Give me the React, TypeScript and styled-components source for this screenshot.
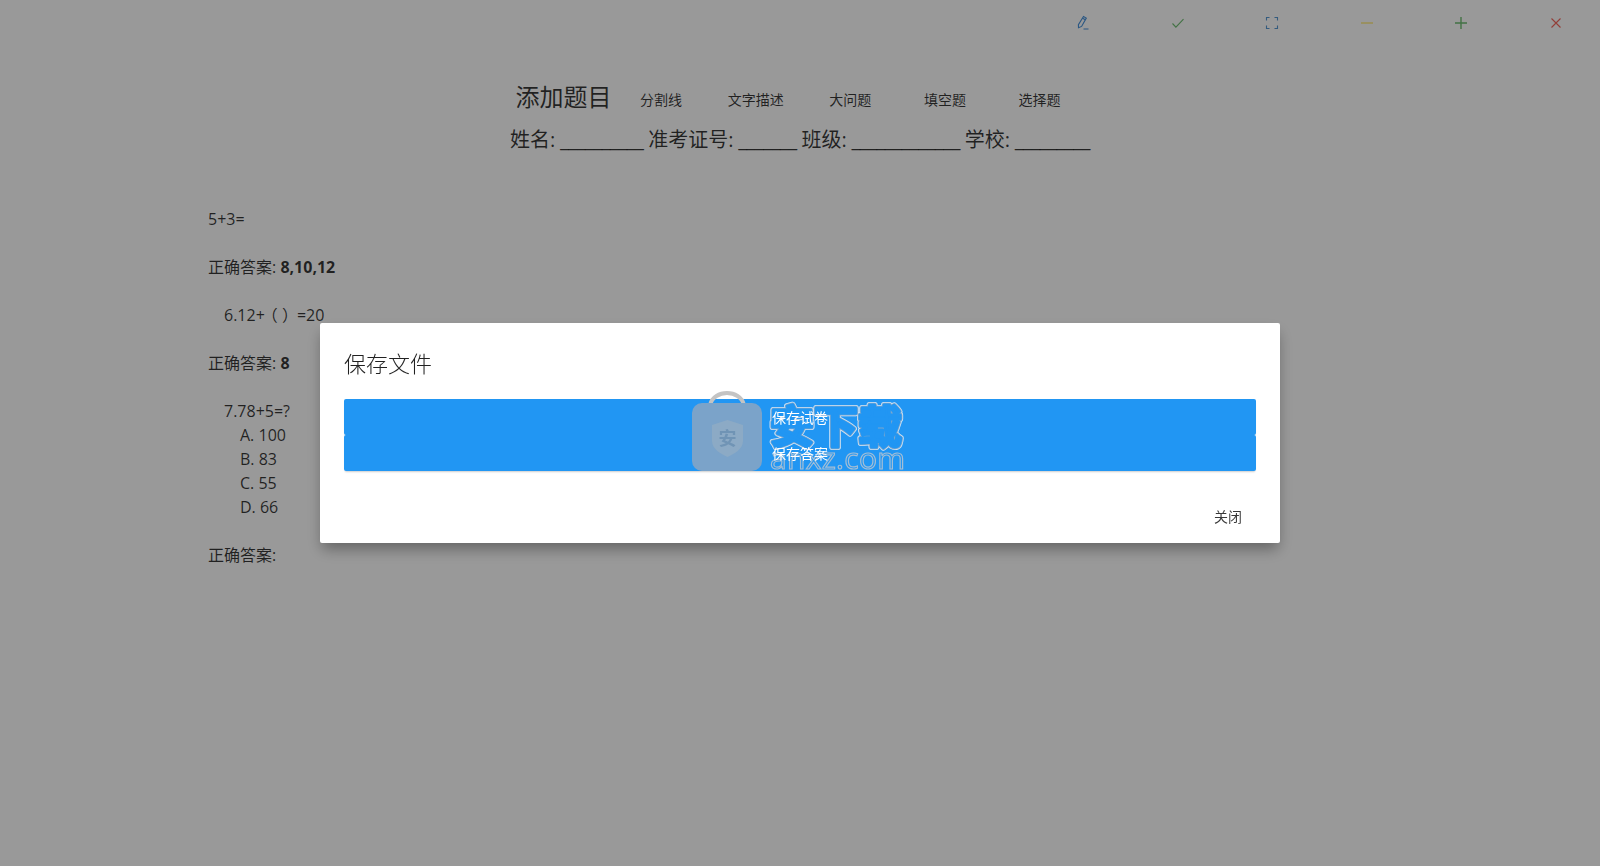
import * as React from 'react';
import styled, { createGlobalStyle } from 'styled-components';

const FONT = '"Open Sans", "Noto Sans CJK SC", sans-serif';

const GlobalStyle = createGlobalStyle`
  html, body {
    margin: 0;
    padding: 0;
    height: 100%;
    background: #fff;
  }
  body {
    font-family: ${FONT};
    font-size: 16px;
    line-height: 24px;
    color: rgba(0, 0, 0, 0.78);
    overflow: hidden;
  }
`;

const Toolbar = styled.div`
  display: flex;
  justify-content: flex-end;
  gap: 4.6px;
  height: 44px;
  padding-top: 1px;
`;

const IconButton = styled.button<{ $tint: string }>`
  width: 90px;
  height: 44px;
  padding: 0 0 0 2px;
  border: 0;
  background: none;
  color: ${(p) => p.$tint};
  opacity: 0.8;
  display: flex;
  align-items: center;
  justify-content: center;
`;

const Head = styled.div`
  display: flex;
  justify-content: center;
  align-items: center;
  gap: 4.6px;
  margin-top: 31px;
  height: 46px;
`;

const Title = styled.h1`
  margin: 0 0 4px;
  font-size: 24px;
  line-height: 32px;
  font-weight: 400;
`;

const TextButton = styled.button`
  width: 90px;
  height: 36px;
  padding: 0;
  border: 0;
  background: none;
  font: 400 14px ${FONT};
  color: rgba(0, 0, 0, 0.78);
`;

const Info = styled.div`
  margin-top: 3px;
  text-align: center;
  font-size: 20px;
  line-height: 30px;
  word-spacing: -0.5px;
`;

const Blank = styled.span`
  letter-spacing: -0.4px;
`;

const Paper = styled.div`
  padding: 52px 208px 0;
`;

const Question = styled.div`
  margin-bottom: 24px;
`;

const Stem = styled.div<{ $indent?: boolean }>`
  padding-left: ${(p) => (p.$indent ? '16px' : '0')};
`;

const Paren = styled.span`
  margin: 0 -1px 0 -3px;
`;

const Choice = styled.div`
  padding-left: 32px;
`;

const Overlay = styled.div`
  position: fixed;
  inset: 0;
  background: rgba(0, 0, 0, 0.4);
  display: flex;
  align-items: flex-start;
  justify-content: center;
  padding-top: 323px;
`;

const Dialog = styled.div`
  position: relative;
  width: 960px;
  height: 220px;
  box-sizing: border-box;
  background: #fff;
  border-radius: 2px;
  box-shadow: 0 8px 14px -2px rgba(0, 0, 0, 0.35);
  padding: 24px;
  display: flex;
  flex-direction: column;
`;

const DialogTitle = styled.h2`
  margin: 0 0 20px;
  font-size: 22px;
  line-height: 32px;
  font-weight: 300;
  color: rgba(0, 0, 0, 0.87);
`;

const Actions = styled.div`
  display: flex;
  flex-direction: column;
`;

const SaveButton = styled.button`
  height: 36px;
  border: 0;
  border-radius: 2px;
  background: #2196f3;
  font: 400 14px ${FONT};
  box-shadow: 0 2px 2px -1px rgba(0, 0, 0, 0.2);
`;

const SaveLabel = styled.span`
  position: relative;
  z-index: 2;
  color: #fff;
`;

const Footer = styled.div`
  display: flex;
  justify-content: flex-end;
  margin-top: 27px;
`;

const CloseButton = styled.button`
  width: 56px;
  height: 36px;
  padding: 0;
  border: 0;
  background: none;
  font: 400 14px ${FONT};
  color: rgba(0, 0, 0, 0.78);
`;

const Watermark = styled.svg`
  position: absolute;
  z-index: 1;
  left: 372px;
  top: 65px;
  pointer-events: none;
`;

const Icon = ({ children }: { children: React.ReactNode }) => (
  <svg width="16" height="16" viewBox="0 0 16 16" fill="none" stroke="currentColor" strokeWidth="1.1">
    {children}
  </svg>
);

export default function App() {
  return (
    <>
      <GlobalStyle />
      <Toolbar>
        <IconButton $tint="#1976d2">
          <Icon>
            <path d="M8.500 1.500l2.800 1.600-4.700 8.300-3.100 1.300-.1-3z" />
            <path d="M7.600 3.200l2.800 1.600M8.500 14h5" />
          </Icon>
        </IconButton>
        <IconButton $tint="#4caf50">
          <Icon>
            <path d="M2.500 8.500l3.400 3.600 7.600-8" />
          </Icon>
        </IconButton>
        <IconButton $tint="#2f7fc8">
          <Icon>
            <path d="M2.500 5.500v-3h3M10.500 2.500h3v3M13.500 10.500v3h-3M5.500 13.500h-3v-3" />
          </Icon>
        </IconButton>
        <IconButton $tint="#ffdf2e">
          <Icon>
            <path d="M2 8h12" />
          </Icon>
        </IconButton>
        <IconButton $tint="#4caf50">
          <Icon>
            <path d="M2 8h12M8 2v12" strokeWidth="1.4" />
          </Icon>
        </IconButton>
        <IconButton $tint="#f44336">
          <Icon>
            <path d="M3.500 3.500l9 9M12.500 3.500l-9 9" />
          </Icon>
        </IconButton>
      </Toolbar>
      <Head>
        <Title>添加题目</Title>
        <TextButton>分割线</TextButton>
        <TextButton>文字描述</TextButton>
        <TextButton>大问题</TextButton>
        <TextButton>填空题</TextButton>
        <TextButton>选择题</TextButton>
      </Head>
      <Info>
        姓名: <Blank>__________</Blank> 准考证号: <Blank>_______</Blank> 班级: <Blank>_____________</Blank> 学校: <Blank>_________</Blank>
      </Info>
      <Paper>
        <Question>5+3=</Question>
        <Question>
          正确答案: <b>8,10,12</b>
        </Question>
        <Question>
          <Stem $indent>6.12+<Paren>（ ）</Paren>=20</Stem>
        </Question>
        <Question>
          正确答案: <b>8</b>
        </Question>
        <Question>
          <Stem $indent>7.78+5=?</Stem>
          <Choice>A. 100</Choice>
          <Choice>B. 83</Choice>
          <Choice>C. 55</Choice>
          <Choice>D. 66</Choice>
        </Question>
        <Question>正确答案:</Question>
      </Paper>
      <Overlay>
        <Dialog>
          <DialogTitle>保存文件</DialogTitle>
          <Actions>
            <SaveButton><SaveLabel>保存试卷</SaveLabel></SaveButton>
            <SaveButton><SaveLabel>保存答案</SaveLabel></SaveButton>
          </Actions>
          <Footer>
            <CloseButton>关闭</CloseButton>
          </Footer>
          <Watermark width="226" height="90" viewBox="0 0 226 90">
            <path d="M18 17 C22 1 48 1 52 17" fill="none" stroke="#c4c4c4" strokeWidth="4" />
            <rect x="0" y="15" width="70" height="68" rx="10" fill="#7ba3c9" />
            <path d="M20 37 L35.500 32 L51 37 V53 C51 61 42 66 35.500 69 C29 66 20 61 20 53 Z" fill="#8caac5" />
            <text x="35.500" y="57" textAnchor="middle" fontFamily={FONT} fontSize="18" fontWeight="700" fill="#7094b5">安</text>
            <text x="78" y="55" fontFamily={FONT} fontSize="44" fontWeight="700" fill="none" stroke="#d4e6f6" strokeWidth="6" strokeLinejoin="round">安下载</text>
            <text x="78" y="55" fontFamily={FONT} fontSize="44" fontWeight="700" fill="none" stroke="#7da6cc" strokeWidth="4.500" strokeLinejoin="round">安下载</text>
            <text x="78" y="55" fontFamily={FONT} fontSize="44" fontWeight="700" fill="#2196f3" stroke="#2196f3" strokeWidth="3" strokeLinejoin="round">安下载</text>
            <text x="78" y="81" fontFamily={FONT} fontSize="30" fill="none" stroke="#a3bed6" strokeWidth="1.200" textLength="135">anxz.com</text>
          </Watermark>
        </Dialog>
      </Overlay>
    </>
  );
}
